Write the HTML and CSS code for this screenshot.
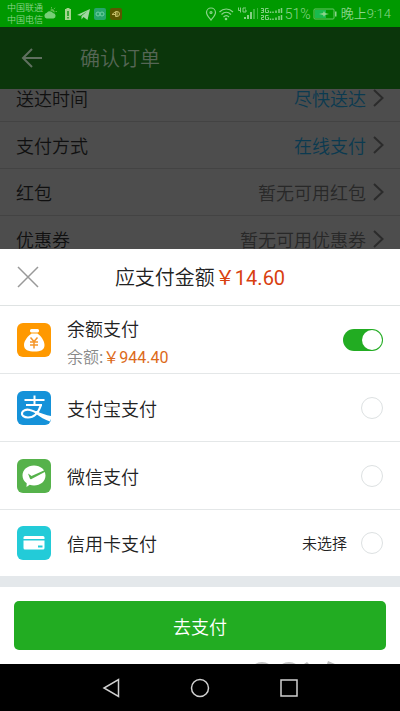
FILE: index.html
```html
<!DOCTYPE html>
<html lang="zh-CN">
<head>
<meta charset="utf-8">
<meta name="viewport" content="width=device-width, initial-scale=1">
<title>确认订单</title>
<link rel="stylesheet" href="styles.css">
</head>
<body>
<div class="screen">
  <div class="status">
    <div class="carriers"><span>中国联通</span><span>中国电信</span></div>
    <svg class="notices" width="82" height="16" viewBox="0 0 82 16" aria-hidden="true">
      <path fill="#78ce78" d="M3.500 12.500a3 3 0 0 1 .3-5.800A3.800 3.800 0 0 1 10 7a2.800 2.800 0 0 1 .5 5.500z"/>
      <path fill="#5bbb4b" d="M7.500 3.500a2.700 2.700 0 0 1 3.800 3.600C10.500 5.500 9 4.600 7.500 4.700z"/>
      <path stroke="#5bbb4b" d="M8.500 2.500V1M11 3l1-1.200M12.500 5.500H14"/>
      <path fill="#a5d58e" d="M22 3h1.500V2h3v1H28v11h-6z"/>
      <path stroke="#159815" stroke-width="1.500" d="M25 5v5M25 11v1.500"/>
      <path fill="#a2d7a2" d="M34 9 47 3l-2.500 11-4-3-2 2.500V10l6-5-7 4.700z"/>
      <rect x="51" y="2" width="12" height="12" rx="2" fill="#25a66a"/>
      <g fill="none" stroke="#71cfa1"><circle cx="55" cy="8" r="2"/><circle cx="59" cy="8" r="2"/></g>
      <rect x="67" y="2" width="12" height="12" rx="2" fill="#595600"/>
      <path fill="none" stroke="#c5bd68" d="M72.500 5.500h1.500a2.500 2.500 0 0 1 0 5h-1.500zM72 6l-3 2.500h3M74 6v4"/>
    </svg>
    <svg class="signals" width="80" height="16" viewBox="0 0 80 16" aria-hidden="true">
      <g fill="none" stroke="#8bd48b" stroke-width="1.200">
        <path d="M6 14C3.500 11 1.500 9 1.500 6.500a4.500 4.500 0 0 1 9 0C10.500 9 8.500 11 6 14z"/><circle cx="6" cy="6.500" r="1"/>
        <path d="M14.500 6c4-4 9.500-4 13.500 0M16.500 8.500c3-3 6.500-3 9.500 0M18.500 11c2-2 3.500-2 5.500 0"/>
      </g>
      <circle cx="21" cy="13" r="1.300" fill="#8bd48b"/>
      <g fill="none" stroke="#83d083">
        <path d="M33.500 1.500v3H36M35.500 1.500v5M41 2h-3v4h3V4h-1"/>
        <path stroke-width="2" d="M40 13v-2M43 13V9M46 13V6"/>
        <path stroke="#3bb63b" stroke-width="2" d="M49 13V3"/><path stroke="#3bb63b" d="M52.500 13V2"/>
        <path d="M56 2.500h2.500v4H56M56.500 4.500h2M63.500 2.500h-3v4h3v-2h-1M56 9.500h2.500v2H56.500v2H59M63.500 9.500h-3v4h3v-2h-1"/>
        <path stroke-width="1.500" d="M65.500 7V5.500M68 7V5.500M71 7V4.500M74 7V3M76.500 7V2M65.500 14v-1.500M68 14v-1.500M71 14v-2.500M74 14v-4M76.500 14V9"/>
      </g>
    </svg>
    <span class="percent">51%</span>
    <svg class="battery" width="24" height="12" viewBox="0 0 24 12" aria-hidden="true">
      <rect x="1" y="1" width="20" height="10" rx="1" fill="none" stroke="#67c767"/>
      <rect x="2" y="2" width="11" height="8" fill="#19bb4d"/>
      <path fill="#8bd48b" d="M22 3.500h1.500v5H22zM6 6l4-1 1-2 1 2 4 1-4 1-1 2-1-2z"/>
    </svg>
    <span class="clock">晚上9:14</span>
  </div>

  <main class="app">
    <header class="header">
      <button class="back" aria-label="返回"><svg width="22" height="20" viewBox="0 0 22 20" aria-hidden="true"><path d="M21 10H2M11 1 2 10l9 9"/></svg></button>
      <h1>确认订单</h1>
    </header>
    <div class="options">
      <a class="option" href="#time"><span>送达时间</span><span class="value link">尽快送达</span><svg class="chevron" width="11" height="18" viewBox="0 0 11 18" aria-hidden="true"><path d="m1 1 8.500 8L1 17"/></svg></a>
      <a class="option" href="#method"><span>支付方式</span><span class="value link">在线支付</span><svg class="chevron" width="11" height="18" viewBox="0 0 11 18" aria-hidden="true"><path d="m1 1 8.500 8L1 17"/></svg></a>
      <a class="option" href="#bonus"><span>红包</span><span class="value">暂无可用红包</span><svg class="chevron" width="11" height="18" viewBox="0 0 11 18" aria-hidden="true"><path d="m1 1 8.500 8L1 17"/></svg></a>
      <a class="option" href="#coupon"><span>优惠券</span><span class="value">暂无可用优惠券</span><svg class="chevron" width="11" height="18" viewBox="0 0 11 18" aria-hidden="true"><path d="m1 1 8.500 8L1 17"/></svg></a>
    </div>

    <section class="sheet">
      <div class="sheet-head">
        <button class="close" aria-label="关闭"><svg width="22" height="22" viewBox="0 0 22 22" aria-hidden="true"><path d="m1 1 20 20M21 1 1 21"/></svg></button>
        <h2>应支付金额<span class="amount">&#xFFE5;14.60</span></h2>
      </div>
      <div class="method">
        <svg class="icon" width="34" height="34" viewBox="0 0 34 34" aria-hidden="true">
          <rect width="34" height="34" rx="6" fill="#ff9900"/>
          <path fill="#fff" d="M14.500 6h6c2 0 2 3.500 0 3.500h-6c-2 0-2-3.500 0-3.500zM14.500 10.500h6c3 2 7 7 7 11.500 0 5-4 6.500-10 6.500S7 27 7 22c0-4.500 4.500-9.500 7.500-11.500z"/>
          <path fill="none" stroke="#f5962a" stroke-width="1.500" d="m13.500 14.500 3.500 4 3.500-4M17 18v7.500M13 19h8M13 22h8"/>
        </svg>
        <label class="name stacked" for="balance">余额支付<span class="balance">余额:<span class="money">&#xFFE5;944.40</span></span></label>
        <input class="switch" type="checkbox" id="balance" checked>
      </div>
      <div class="method">
        <svg class="icon" width="34" height="34" viewBox="0 0 34 34" aria-hidden="true">
          <rect width="34" height="34" rx="6" fill="#1592d9"/>
          <path fill="none" stroke="#fff" stroke-width="2" d="M7.500 9h20M17.500 4.500V14M9 14h16"/>
          <path fill="none" stroke="#fff" stroke-width="2.200" d="M24 14c-2 6-6 12.500-13 12.500-4 0-6.500-2-6-4.500s4-4 8-3c5 1 8 4 13 6"/>
          <path fill="#fff" d="M19 20c5 2.500 10 4 15 5v3l-1 2.500c-5-1.500-10-4.500-15-8.500z"/>
        </svg>
        <label class="name" for="alipay">支付宝支付</label>
        <input class="radio" type="radio" name="pay" id="alipay">
      </div>
      <div class="method">
        <svg class="icon" width="34" height="34" viewBox="0 0 34 34" aria-hidden="true">
          <rect width="34" height="34" rx="6" fill="#56b24b"/>
          <path fill="#fff" d="M17 6.500c6.500 0 11.500 4.300 11.500 10S23.500 26.500 17 26.500c-1.500 0-3-.2-4.300-.7L9.500 28l.2-3.800c-2.500-1.700-4.200-4.500-4.200-7.700 0-5.700 5-10 11.500-10z"/>
          <path fill="#56b24b" d="m11 14.500 3.500 2.500L28 11l.7 1.500L14.500 20c-.8.500-1.300.2-1.700-.7z"/>
        </svg>
        <label class="name" for="wechat">微信支付</label>
        <input class="radio" type="radio" name="pay" id="wechat">
      </div>
      <div class="method">
        <svg class="icon" width="34" height="34" viewBox="0 0 34 34" aria-hidden="true">
          <rect width="34" height="34" rx="6" fill="#23cbd8"/>
          <path fill="#fff" d="M8 10h18a1.500 1.500 0 0 1 1.500 1.500V13h-21v-1.500A1.500 1.500 0 0 1 8 10zM6.500 14.500h21V22a1.500 1.500 0 0 1-1.500 1.500H8A1.500 1.500 0 0 1 6.500 22z"/>
          <path fill="#23cbd8" d="M21 19.500h4.500v2H21z"/>
        </svg>
        <label class="name" for="card">信用卡支付</label>
        <span class="choice">未选择</span>
        <input class="radio" type="radio" name="pay" id="card">
      </div>
      <div class="footer">
        <button class="pay">去支付</button>
        <svg class="mark" width="84" height="3" viewBox="0 0 84 3" aria-hidden="true">
          <g fill="none" stroke="#c4c4c4" stroke-width="2"><ellipse cx="10" cy="10" rx="10" ry="8"/><ellipse cx="37" cy="10" rx="10" ry="8"/></g>
          <path fill="#bbb" d="m52 3 3-2 2 2zM75 3l1-3 7 3z"/>
        </svg>
      </div>
    </section>
  </main>

  <nav class="nav">
    <button aria-label="返回"><svg width="20" height="20" viewBox="0 0 20 20" aria-hidden="true"><path d="M17.500 1.500v17L3 10z"/></svg></button>
    <button aria-label="主屏幕"><svg width="20" height="20" viewBox="0 0 20 20" aria-hidden="true"><circle cx="10" cy="10" r="8.500"/></svg></button>
    <button aria-label="最近任务"><svg width="20" height="20" viewBox="0 0 20 20" aria-hidden="true"><path d="M2 2h16v16H2z"/></svg></button>
  </nav>
</div>
</body>
</html>
```
FILE: styles.css
```css
* {
  box-sizing: border-box;
}

body {
  margin: 0;
  font-family: "Noto Sans CJK SC", sans-serif;
  font-weight: 350;
  font-size: 18px;
  line-height: 24px;
  color: #222;
}

button {
  padding: 0;
  border: 0;
  background: none;
  font: inherit;
}

svg {
  display: block;
  flex: none;
}

h1,
h2 {
  margin: 0;
  font-size: 20px;
  font-weight: 350;
}

.screen {
  display: flex;
  flex-direction: column;
  height: 100vh;
  overflow: hidden;
}

/* Phone status bar */
.status {
  display: flex;
  align-items: center;
  flex: none;
  height: 27px;
  padding: 0 9px 0 7px;
  background: #009900;
  color: #8bd48b;
  font-family: Roboto, "Noto Sans CJK SC", sans-serif;
  font-size: 14px;
  white-space: nowrap;
}

.carriers {
  display: flex;
  flex-direction: column;
  font-size: 9px;
  line-height: 12px;
}

.signals {
  margin-left: auto;
}

.percent {
  margin-right: 2px;
}

.clock {
  margin-left: 4px;
  font-size: 13px;
}

/* Dimmed order page */
.app {
  position: relative;
  flex: 1;
  min-height: 0;
  overflow: hidden;
  background: #4d4d4d;
}

.header {
  position: relative;
  z-index: 1;
  display: flex;
  align-items: center;
  gap: 37px;
  height: 62px;
  padding: 0 21px;
  background: #0b360b;
  color: #566656;
}

.back svg {
  fill: none;
  stroke: #607060;
  stroke-width: 2;
}

.options {
  margin-top: -14px;
}

.option {
  display: flex;
  align-items: center;
  height: 47px;
  padding: 0 16px;
  border-bottom: 1px solid #434343;
  color: #101010;
  text-decoration: none;
}

.value {
  margin-left: auto;
  color: #282828;
}

.link {
  color: #0b3a50;
}

.chevron {
  margin-left: 7px;
  fill: none;
  stroke: #2b2b2b;
  stroke-width: 2;
}

/* Payment sheet */
.sheet {
  position: absolute;
  z-index: 2;
  right: 0;
  bottom: 0;
  left: 0;
  background: #fff;
}

.sheet-head {
  display: grid;
  grid-template-columns: 22px 1fr 22px;
  align-items: center;
  height: 57px;
  padding: 0 17px;
  border-bottom: 1px solid #dfe3e3;
  text-align: center;
}

.close svg {
  fill: none;
  stroke: #999;
  stroke-width: 1.5;
}

.amount,
.money {
  font-family: Roboto, "Noto Sans CJK SC", sans-serif;
  font-weight: 400;
}

.amount {
  color: #d8400f;
}

.method {
  display: flex;
  align-items: center;
  height: 68px;
  padding: 0 17px;
  border-bottom: 1px solid #e4e7e8;
}

.method:nth-last-child(2) {
  height: 66px;
  border-bottom: 0;
}

.name {
  flex: 1;
  margin-left: 16px;
}

.stacked {
  padding-top: 6px;
}

.balance {
  display: block;
  margin-top: 4px;
  color: #888;
  font-size: 16px;
}

.money {
  color: #dc6a1a;
}

.choice {
  margin-right: 14px;
  font-size: 15px;
}

.switch,
.radio {
  flex: none;
  margin: 0;
  appearance: none;
}

.switch {
  display: flex;
  justify-content: flex-end;
  width: 40px;
  height: 22px;
  padding: 1px;
  border-radius: 11px;
  background: #22ac22;
}

.switch::before {
  content: "";
  width: 20px;
  height: 20px;
  border-radius: 50%;
  background: #fff;
}

.switch:not(:checked) {
  justify-content: flex-start;
  background: #ccc;
}

.radio {
  width: 22px;
  height: 22px;
  border: 1px solid #dde1e2;
  border-radius: 50%;
}

.radio:checked {
  border: 7px solid #22ac22;
}

.footer {
  position: relative;
  padding: 14px;
  border-top: 11px solid #e4e8eb;
}

.pay {
  display: block;
  width: 100%;
  height: 49px;
  border-radius: 5px;
  background: #22ac22;
  color: #fff;
}

.mark {
  position: absolute;
  right: 64px;
  bottom: 0;
}

/* System navigation */
.nav {
  display: flex;
  justify-content: center;
  align-items: center;
  gap: 69px;
  flex: none;
  height: 47px;
  background: #000;
}

.nav svg {
  fill: none;
  stroke: #d0d0d0;
  stroke-width: 1.5;
}
```
